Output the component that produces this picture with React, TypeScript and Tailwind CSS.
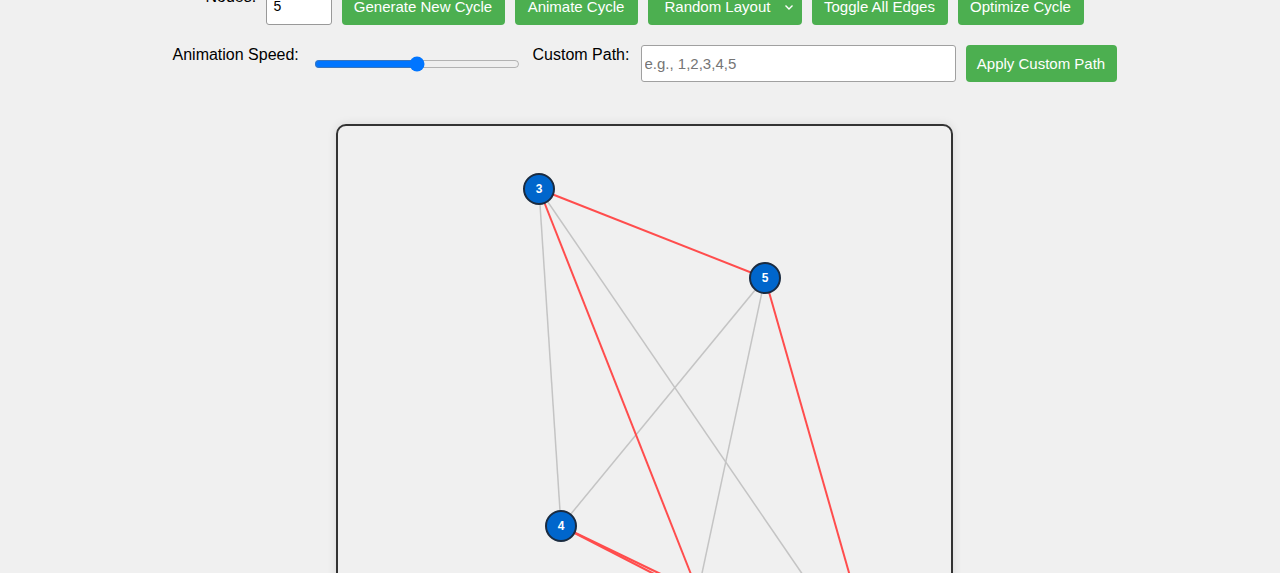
import React from "react";

const nodes = [
  { id: 3, x: 201, y: 63 },
  { id: 5, x: 427, y: 152 },
  { id: 4, x: 223, y: 400 },
  { id: 1, x: 360, y: 466 },
  { id: 2, x: 545, y: 566 },
];

const pos: Record<number, { x: number; y: number }> = {};
nodes.forEach((n) => (pos[n.id] = n));

const cycle = [3, 5, 2, 4, 1];

function isCycleEdge(a: number, b: number) {
  for (let i = 0; i < cycle.length; i++) {
    const u = cycle[i];
    const v = cycle[(i + 1) % cycle.length];
    if ((u === a && v === b) || (u === b && v === a)) return true;
  }
  return false;
}

export default function App() {
  const ids = nodes.map((n) => n.id);
  const gray: [number, number][] = [];
  const red: [number, number][] = [];
  for (let i = 0; i < ids.length; i++) {
    for (let j = i + 1; j < ids.length; j++) {
      if (isCycleEdge(ids[i], ids[j])) red.push([ids[i], ids[j]]);
      else gray.push([ids[i], ids[j]]);
    }
  }

  const btn =
    "h-[37px] rounded-[4px] bg-[#4caf50] text-white text-[15px] leading-none flex items-center justify-center whitespace-nowrap";

  return (
    <div
      className="min-h-screen bg-[#f0f0f0] text-black pl-[9px] overflow-hidden"
      style={{ fontFamily: '"Liberation Sans", Arial, sans-serif' }}
    >
      <div className="flex flex-col items-center mt-[-12px]">
        <div className="flex items-start gap-[10px]">
          <label className="text-[16px] leading-[18px] w-[50px]">Nodes:</label>
          <div className="h-[37px] w-[66px] bg-white border border-[#999] rounded-[3px] flex items-center pl-[7px] text-[14px]">
            5
          </div>
          <div className={btn + " w-[163px]"}>Generate New Cycle</div>
          <div className={btn + " w-[123px]"}>Animate Cycle</div>
          <div className={btn + " w-[154px] pl-[17px] pr-[8px] !justify-between"}>
            <span>Random Layout</span>
            <svg width="10" height="10" viewBox="0 0 10 10">
              <path d="M1.5 3.5 L5 7 L8.5 3.5" fill="none" stroke="white" strokeWidth="1.4" />
            </svg>
          </div>
          <div className={btn + " w-[136px]"}>Toggle All Edges</div>
          <div className={btn + " w-[126px]"}>Optimize Cycle</div>
        </div>

        <div className="flex items-start gap-[10px] mt-[20px]">
          <label className="text-[16px] leading-[18px] mt-[1px] w-[129px]">Animation Speed:</label>
          <input
            type="range"
            min={0}
            max={100}
            defaultValue={50}
            className="w-[206px] mx-[2px] mt-[11px] accent-[#0075ff]"
          />
          <label className="text-[16px] leading-[18px] mt-[1px] ml-[1px] w-[98px]">Custom Path:</label>
          <input
            type="text"
            placeholder="e.g., 1,2,3,4,5"
            className="h-[37px] w-[315px] bg-white border border-[#a0a0a0] rounded-[3px] px-[3px] text-[15px] placeholder:text-[#757575] outline-none"
          />
          <div className={btn + " w-[151px]"}>Apply Custom Path</div>
        </div>

        <div className="mt-[42px] w-[617px] h-[617px] border-2 border-[#333] rounded-[10px] bg-[#f0f0f0] shadow-[0_0_10px_rgba(0,0,0,0.1)] overflow-hidden">
          <svg width="613" height="613" viewBox="0 0 613 613">
            {gray.map(([a, b]) => (
              <line
                key={`g${a}-${b}`}
                x1={pos[a].x}
                y1={pos[a].y}
                x2={pos[b].x}
                y2={pos[b].y}
                stroke="#c4c4c4"
                strokeWidth={1.5}
              />
            ))}
            {red.map(([a, b]) => (
              <line
                key={`r${a}-${b}`}
                x1={pos[a].x}
                y1={pos[a].y}
                x2={pos[b].x}
                y2={pos[b].y}
                stroke="#ff4d4d"
                strokeWidth={2}
              />
            ))}
            {nodes.map((n) => (
              <g key={n.id}>
                <circle cx={n.x} cy={n.y} r={15} fill="#0066cc" stroke="#1a2b40" strokeWidth={2} />
                <text
                  x={n.x}
                  y={n.y + 4}
                  textAnchor="middle"
                  fill="white"
                  fontSize="12"
                  fontWeight="bold"
                  fontFamily='"Liberation Sans", Arial, sans-serif'
                >
                  {n.id}
                </text>
              </g>
            ))}
          </svg>
        </div>
      </div>
    </div>
  );
}
